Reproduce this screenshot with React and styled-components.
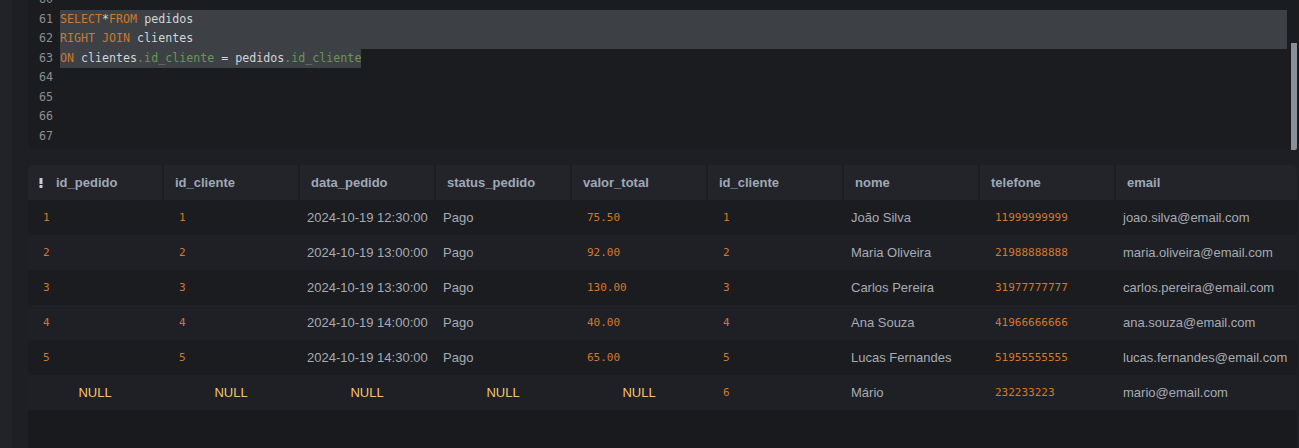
import React from "react";
import styled, { createGlobalStyle } from "styled-components";

const Global = createGlobalStyle`
  html, body {
    margin: 0;
    padding: 0;
    background: #1e1f24;
    overflow: hidden;
  }
`;

const codeLines = [
  { n: 60, parts: [] },
  {
    n: 61,
    sel: "full",
    parts: [
      ["kw", "SELECT"],
      ["tx", "*"],
      ["kw", "FROM"],
      ["tx", " pedidos"],
    ],
  },
  {
    n: 62,
    sel: "full",
    parts: [
      ["kw", "RIGHT JOIN"],
      ["tx", " clientes"],
    ],
  },
  {
    n: 63,
    sel: "text",
    parts: [
      ["kw", "ON"],
      ["tx", " clientes"],
      ["fd", ".id_cliente"],
      ["tx", " = pedidos"],
      ["fd", ".id_cliente"],
    ],
  },
  { n: 64, parts: [] },
  { n: 65, parts: [] },
  { n: 66, parts: [] },
  { n: 67, parts: [] },
];

const columns = [
  "id_pedido",
  "id_cliente",
  "data_pedido",
  "status_pedido",
  "valor_total",
  "id_cliente",
  "nome",
  "telefone",
  "email",
];

// type per column: n = number (mono, orange), t = text
const kinds = ["n", "n", "t", "t", "n", "n", "t", "n", "t"];

const rows = [
  ["1", "1", "2024-10-19 12:30:00", "Pago", "75.50", "1", "João Silva", "11999999999", "joao.silva@email.com"],
  ["2", "2", "2024-10-19 13:00:00", "Pago", "92.00", "2", "Maria Oliveira", "21988888888", "maria.oliveira@email.com"],
  ["3", "3", "2024-10-19 13:30:00", "Pago", "130.00", "3", "Carlos Pereira", "31977777777", "carlos.pereira@email.com"],
  ["4", "4", "2024-10-19 14:00:00", "Pago", "40.00", "4", "Ana Souza", "41966666666", "ana.souza@email.com"],
  ["5", "5", "2024-10-19 14:30:00", "Pago", "65.00", "5", "Lucas Fernandes", "51955555555", "lucas.fernandes@email.com"],
  [null, null, null, null, null, "6", "Mário", "232233223", "mario@email.com"],
];

export default function App() {
  return (
    <Page>
      <Global />
      <SideStrip />
      <Main>
        <Editor>
          <Code>
            {codeLines.map((l) => (
              <Line key={l.n}>
                <LineNo>{l.n}</LineNo>
                <LineText $sel={l.sel}>
                  {l.parts.map(([k, t], i) => (
                    <Token key={i} $kind={k}>
                      {t}
                    </Token>
                  ))}
                </LineText>
              </Line>
            ))}
          </Code>
          <ScrollTrack>
            <ScrollThumb />
          </ScrollTrack>
        </Editor>

        <TableWrap>
          <HeadRow>
            {columns.map((c, i) => (
              <HeadCell key={i}>
                {i === 0 && (
                  <svg width="4" height="10" viewBox="0 0 4 10">
                    <rect x="0.5" y="0" width="3" height="6" fill="#c9cdd3" />
                    <rect x="0.5" y="7" width="3" height="3" fill="#c9cdd3" />
                  </svg>
                )}
                <span>{c}</span>
              </HeadCell>
            ))}
          </HeadRow>
          {rows.map((r, ri) => (
            <Row key={ri} $alt={ri % 2 === 1}>
              {r.map((v, ci) =>
                v === null ? (
                  <NullCell key={ci}>NULL</NullCell>
                ) : (
                  <Cell key={ci} $kind={kinds[ci]}>
                    {v}
                  </Cell>
                )
              )}
            </Row>
          ))}
        </TableWrap>
      </Main>
    </Page>
  );
}

const Page = styled.div`
  display: flex;
  height: 448px;
  background: #1e1f24;
`;

const SideStrip = styled.div`
  width: 12px;
  background: #222328;
  flex-shrink: 0;
`;

const Main = styled.div`
  flex: 1;
  display: flex;
  flex-direction: column;
  padding-left: 16px;
  gap: 15px;
  min-width: 0;
`;

const Editor = styled.div`
  height: 150px;
  display: flex;
  background: #1b1c20;
  border-bottom-left-radius: 8px;
  overflow: hidden;
  flex-shrink: 0;
`;

const Code = styled.div`
  flex: 1;
  margin-top: -10px;
  font-family: "DejaVu Sans Mono", monospace;
  font-size: 11.65px;
`;

const Line = styled.div`
  display: flex;
  height: 19.5px;
  align-items: stretch;
`;

const LineNo = styled.div`
  width: 25px;
  padding-right: 7px;
  text-align: right;
  color: #8b8e94;
  line-height: 19.5px;
  flex-shrink: 0;
`;

const LineText = styled.div`
  line-height: 19.5px;
  white-space: pre;
  flex: ${(p) => (p.$sel === "full" ? 1 : "0 0 auto")};
  background: ${(p) => (p.$sel ? "#3d4145" : "transparent")};
`;

const tokenColors = {
  kw: "#cc7832",
  tx: "#d2d4d8",
  fd: "#6a9559",
};

const Token = styled.span`
  color: ${(p) => tokenColors[p.$kind]};
`;

const ScrollTrack = styled.div`
  width: 12px;
  padding: 43px 2px 0 4px;
  box-sizing: border-box;
  flex-shrink: 0;
`;

const ScrollThumb = styled.div`
  width: 6px;
  height: 107px;
  background: #8a9099;
  border-bottom-right-radius: 2px;
`;

const TableWrap = styled.div`
  flex: 1;
  background: #191a1e;
  border-radius: 6px 6px 0 0;
  overflow: hidden;
  margin-right: 2px;
`;

const grid = `
  display: grid;
  grid-template-columns: repeat(8, 134px) 1fr;
  column-gap: 2px;
  height: 35px;
`;

const HeadRow = styled.div`
  ${grid}
  background: #1c1d21;
`;

const HeadCell = styled.div`
  display: flex;
  align-items: center;
  gap: 13px;
  padding-left: 11px;
  background: #23242a;
  font-family: "Liberation Sans", Arial, sans-serif;
  font-weight: bold;
  font-size: 13px;
  color: #9fa8b6;
  white-space: nowrap;
`;

const Row = styled.div`
  ${grid}
  background: ${(p) => (p.$alt ? "#1f2025" : "#1b1c20")};
`;

const Cell = styled.div`
  display: flex;
  align-items: center;
  white-space: nowrap;
  padding-left: ${(p) => (p.$kind === "n" ? "15px" : "7px")};
  padding-bottom: 1px;
  font-family: ${(p) =>
    p.$kind === "n"
      ? '"DejaVu Sans Mono", monospace'
      : '"Liberation Sans", Arial, sans-serif'};
  font-size: ${(p) => (p.$kind === "n" ? "11px" : "13px")};
  color: ${(p) => (p.$kind === "n" ? "#d4782a" : "#a6abb3")};
`;

const NullCell = styled.div`
  display: flex;
  align-items: center;
  justify-content: center;
  padding-bottom: 1px;
  font-family: "Liberation Sans", Arial, sans-serif;
  font-size: 13px;
  color: #f2c46d;
`;
